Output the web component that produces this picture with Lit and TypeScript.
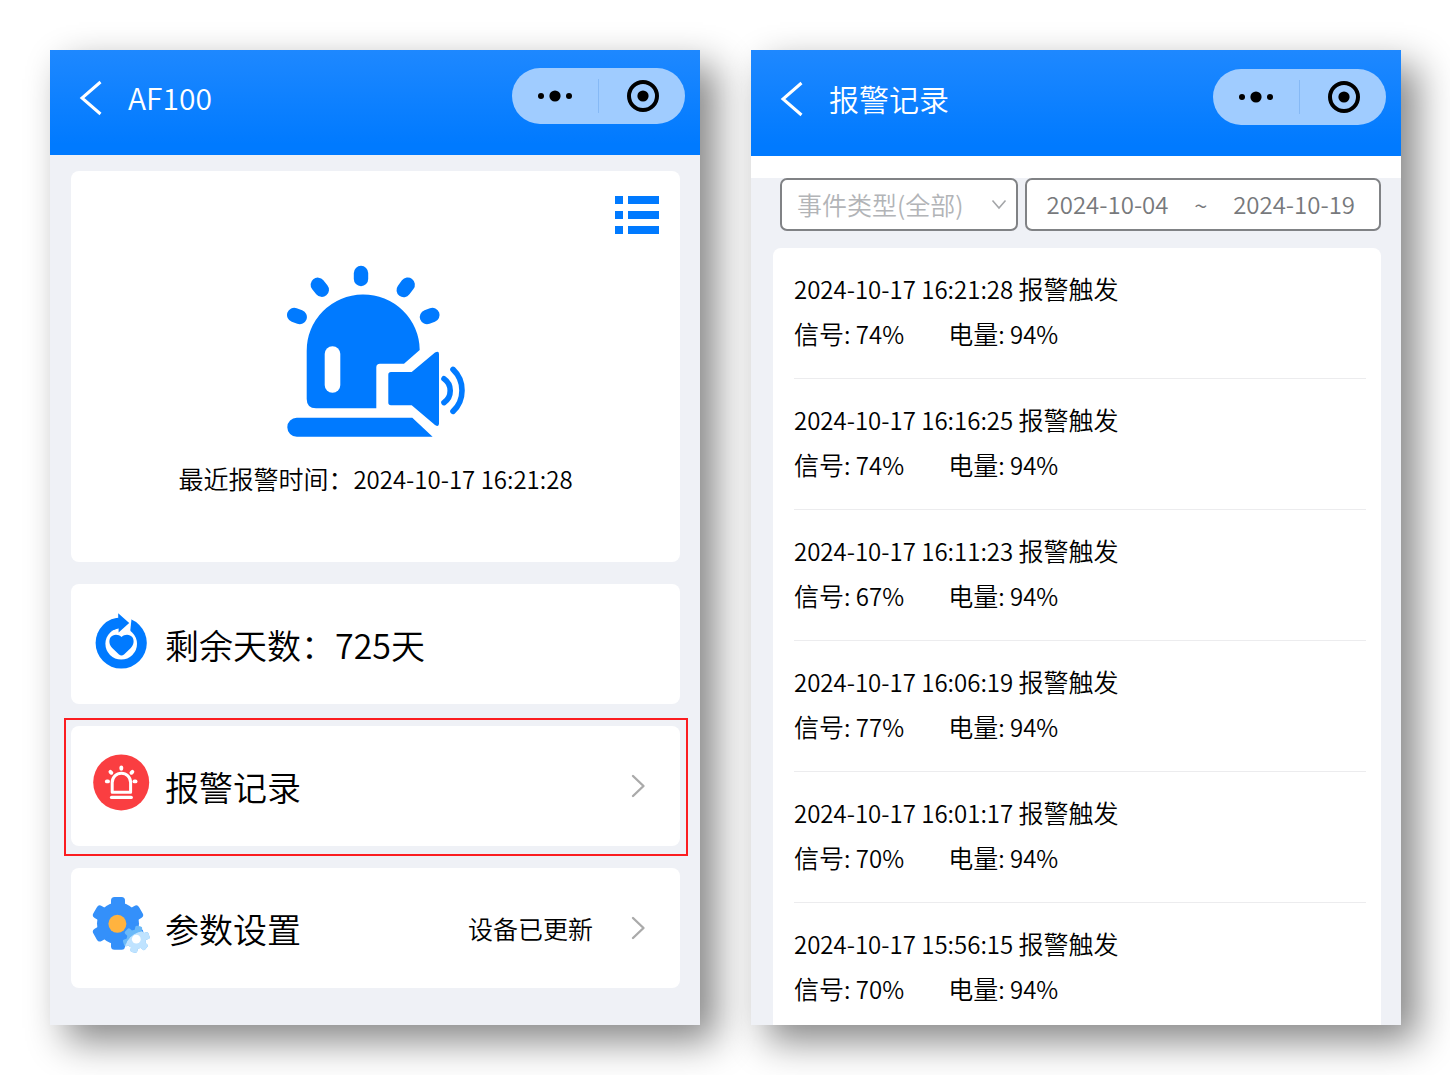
import { LitElement, html, css, svg } from "lit";
import { customElement, property } from "lit/decorators.js";

const fontStack = css`"Noto Sans CJK SC", "Noto Sans", sans-serif`;

interface AlarmRecord {
  time: string;
  event: string;
  signal: number;
  battery: number;
}

const records: AlarmRecord[] = [
  { time: "2024-10-17 16:21:28", event: "报警触发", signal: 74, battery: 94 },
  { time: "2024-10-17 16:16:25", event: "报警触发", signal: 74, battery: 94 },
  { time: "2024-10-17 16:11:23", event: "报警触发", signal: 67, battery: 94 },
  { time: "2024-10-17 16:06:19", event: "报警触发", signal: 77, battery: 94 },
  { time: "2024-10-17 16:01:17", event: "报警触发", signal: 70, battery: 94 },
  { time: "2024-10-17 15:56:15", event: "报警触发", signal: 70, battery: 94 },
];

const chevronRight = html`<svg class="chevron" width="15" height="24" viewBox="0 0 15 24" aria-hidden="true">
  <path d="M2 2 L12.5 12 L2 22" fill="none" stroke="#aaa" stroke-width="2.4" stroke-linecap="round" stroke-linejoin="round" />
</svg>`;

const sirenArt = html`<svg class="siren" width="180" height="174" viewBox="0 0 180 174" fill="#007aff" aria-hidden="true">
  <g stroke="#007aff" stroke-width="14.4" stroke-linecap="round">
    <path d="M75 8V14" />
    <path d="M31.8 19.8L35.8 24.7" />
    <path d="M121.7 19.7L117.7 25" />
    <path d="M8.2 50L13.7 52" />
    <path d="M146.4 50L141 52" />
  </g>
  <path d="M20.7 86A56.5 56 0 0 1 133.7 85L118 98.7H94Q90.3 98.7 90.3 102.4V143.3H30Q20.7 143.3 20.7 134Z" />
  <rect x="38.7" y="81.3" width="15.6" height="46.4" rx="7.8" fill="#fff" />
  <path d="M10.8 152.7H126.3L146.6 171.7H10.8A9.5 9.5 0 0 1 10.8 152.7Z" />
  <path d="M105 107H125.7L149 87.6Q153 85.4 153 89V158.6Q153 162.4 149 160L125.7 140.3H105Q102.3 140.3 102.3 137.6V109.7Q102.3 107 105 107Z" />
  <g fill="none" stroke="#007aff" stroke-width="5.6" stroke-linecap="round">
    <path d="M158 113.8A14.5 14.5 0 0 1 158 137.6" />
    <path d="M167 104.4A29 29 0 0 1 167 146.4" />
  </g>
</svg>`;

const renewIcon = html`<svg class="icon" width="58" height="64" viewBox="0 0 58 64" aria-hidden="true">
  <circle cx="29.2" cy="31" r="25.6" fill="#007aff" />
  <circle cx="29.2" cy="31.8" r="15.8" fill="#fff" />
  <path d="M26 0H39.4V8L38 21H28Z" fill="#fff" />
  <path d="M26.2 1.2L37.2 11L26.6 20.6V16.2L20 18.6V8.6L26.2 6.2Z" fill="#007aff" />
  <path d="M29.5 25C32.6 21.8 38 22 40.4 25.2C42.6 28.8 41.6 33 38.8 36L32 42.6Q29.5 44.4 27 42.6L20.2 36C17.4 33 16.4 28.8 18.6 25.2C21 22 26.4 21.8 29.5 25Z" fill="#007aff" />
</svg>`;

const alarmIcon = html`<svg class="icon" width="58" height="64" viewBox="0 0 58 64" aria-hidden="true">
  <circle cx="29.2" cy="28.4" r="28" fill="#fa3e41" />
  <g fill="none" stroke="#fff" stroke-linecap="round">
    <path d="M20.2 38.2V28.4A9.2 9.2 0 0 1 38.6 28.4V38.2Z" stroke-width="3" stroke-linejoin="round" />
    <path d="M19.6 43.4H39.2" stroke-width="3.4" />
    <g stroke-width="3.8">
      <path d="M14.8 27.4H16" />
      <path d="M18.4 17.8L19.4 18.8" />
      <path d="M29.3 13.4V14.8" />
      <path d="M40.4 17.8L39.4 18.8" />
      <path d="M43.6 27.4H42.4" />
    </g>
  </g>
</svg>`;

const cog = (cx: number, cy: number, body: number, outer: number, tooth: number, turn: number) => svg`
  <circle cx=${cx} cy=${cy} r=${body} />
  ${[0, 60, 120].map(
    (a) => svg`<rect x=${cx - tooth / 2} y=${cy - outer} width=${tooth} height=${outer * 2} rx=${tooth / 4}
      transform="rotate(${a + turn} ${cx} ${cy})" />`
  )}`;

const settingsIcon = html`<svg class="icon" width="58" height="64" viewBox="0 0 58 64" aria-hidden="true">
  <g fill="#3490fa">${cog(26, 27.4, 21, 26.4, 14, 0)}</g>
  <circle cx="25.4" cy="27.8" r="9" fill="#ffb33f" />
  <g fill="#6bb9f8">${cog(44.3, 43.2, 9.8, 13.4, 7, 12)}</g>
  <clipPath id="glow"><circle cx="54" cy="57" r="22" /></clipPath>
  <g fill="#bfe3ff" clip-path="url(#glow)">${cog(44.3, 43.2, 9.8, 13.4, 7, 12)}</g>
  <circle cx="44.3" cy="43.2" r="4.4" fill="#fff" />
</svg>`;

@customElement("phone-header")
export class PhoneHeader extends LitElement {
  @property() heading = "";

  static styles = css`
    :host {
      display: block;
      font-family: ${fontStack};
    }
    .bar {
      display: flex;
      align-items: center;
      padding: 18px 15px 31px 29px;
      background: linear-gradient(#1e88ff, #007aff 90%);
      color: #fff;
    }
    button {
      display: flex;
      align-items: center;
      justify-content: center;
      box-sizing: border-box;
      border: 0;
      padding: 0;
      background: none;
      color: inherit;
      cursor: pointer;
    }
    .back {
      padding-top: 3px;
    }
    h1 {
      flex: 1;
      margin: 0;
      padding: 2px 0 0 25px;
      font-size: 30px;
      line-height: 36px;
      font-weight: 350;
    }
    .capsule {
      display: flex;
      align-items: center;
      height: 56px;
      border-radius: 28px;
      background: #a0ccff;
    }
    .capsule button {
      width: 86px;
      height: 56px;
    }
    .capsule button + .rule + button {
      padding-left: 2px;
    }
    .rule {
      width: 1px;
      height: 34px;
      background: #86b9f5;
    }
  `;

  render() {
    return html`<header class="bar">
      <button class="back" aria-label="返回">
        <svg width="24" height="36" viewBox="0 0 24 36" aria-hidden="true">
          <path d="M21.5 2L3 18L21.5 34" fill="none" stroke="#fff" stroke-width="3" />
        </svg>
      </button>
      <h1>${this.heading}</h1>
      <div class="capsule">
        <button aria-label="更多">
          <svg width="36" height="12" viewBox="0 0 36 12" aria-hidden="true">
            <circle cx="4" cy="6" r="3" /><circle cx="18" cy="6" r="5.6" /><circle cx="32" cy="6" r="3" />
          </svg>
        </button>
        <span class="rule"></span>
        <button aria-label="关闭">
          <svg width="32" height="32" viewBox="0 0 32 32" aria-hidden="true">
            <circle cx="16" cy="16" r="14" fill="none" stroke="#000" stroke-width="4" />
            <circle cx="16" cy="16" r="5.6" />
          </svg>
        </button>
      </div>
    </header>`;
  }
}

@customElement("device-screen")
export class DeviceScreen extends LitElement {
  static styles = css`
    :host {
      display: block;
      background: #eff1f6;
      font-family: ${fontStack};
      font-weight: 350;
      color: #000;
    }
    .content {
      display: flex;
      flex-direction: column;
      gap: 22px;
      padding: 16px 20px 36px 21px;
    }
    .card {
      border-radius: 8px;
      background: #fff;
    }
    .status {
      display: flex;
      flex-direction: column;
      align-items: center;
      padding: 24px 21px 66px;
    }
    .menu {
      align-self: flex-end;
      display: block;
      border: 0;
      padding: 0;
      background: none;
      cursor: pointer;
    }
    .menu svg,
    .siren {
      display: block;
    }
    .siren {
      margin: 30px 0 21px;
    }
    .latest {
      margin: 0;
      font-size: 25px;
      line-height: 36px;
    }
    .digits {
      font-size: 24px;
      line-height: 1;
    }
    .row {
      display: flex;
      align-items: center;
      box-sizing: border-box;
      height: 120px;
      padding: 0 34px 0 21px;
      position: relative;
      font-size: 34px;
      color: inherit;
      text-decoration: none;
    }
    .icon {
      flex: none;
      margin-right: 15px;
    }
    .label {
      flex: 1;
    }
    .note {
      font-size: 25px;
    }
    .chevron {
      margin-left: 38px;
    }
    .marked::after {
      content: "";
      position: absolute;
      inset: -8px -8px -10px -7px;
      border: 2px solid #fb1d20;
    }
  `;

  render() {
    return html`
      <phone-header heading="AF100"></phone-header>
      <div class="content">
        <section class="card status">
          <button class="menu" aria-label="菜单">
            <svg width="44" height="40" viewBox="0 0 44 40" fill="#007aff" aria-hidden="true">
              <rect y="1" width="8" height="8" /><rect x="13" y="1" width="31" height="8" />
              <rect y="16" width="8" height="8" /><rect x="13" y="16" width="31" height="8" />
              <rect y="31" width="8" height="8" /><rect x="13" y="31" width="31" height="8" />
            </svg>
          </button>
          ${sirenArt}
          <p class="latest">最近报警时间：<span class="digits">2024-10-17 16:21:28</span></p>
        </section>
        <div class="card row">${renewIcon}<span class="label">剩余天数：725天</span></div>
        <a class="card row marked" href="#records">${alarmIcon}<span class="label">报警记录</span>${chevronRight}</a>
        <a class="card row" href="#settings">
          ${settingsIcon}<span class="label">参数设置</span><span class="note">设备已更新</span>${chevronRight}
        </a>
      </div>
    `;
  }
}

@customElement("records-screen")
export class RecordsScreen extends LitElement {
  static styles = css`
    :host {
      display: block;
      background: #eff1f6;
      font-family: ${fontStack};
      font-weight: 350;
      color: #000;
    }
    phone-header {
      padding-top: 1px;
      background: #1e88ff;
    }
    .strip {
      height: 22px;
      background: #fff;
    }
    .filters {
      display: grid;
      grid-template-columns: 2fr 3fr;
      gap: 7px;
      padding: 0 20px 17px 29px;
    }
    .field {
      display: flex;
      align-items: center;
      box-sizing: border-box;
      height: 53px;
      border: 2px solid #808285;
      border-radius: 7px;
      background: #fff;
    }
    select,
    input {
      min-width: 0;
      border: 0;
      padding: 0 0 2px;
      background: none;
      font: inherit;
      color: inherit;
      appearance: none;
      outline: 0;
    }
    .type {
      padding: 0 9px 0 15px;
      font-size: 25px;
      color: #b2b4b7;
    }
    .type select {
      flex: 1;
    }
    .range {
      padding: 0 24px 0 20px;
      font-size: 24px;
      color: #77797c;
    }
    .range input {
      flex: 1;
      width: 0;
    }
    .range .to {
      text-align: right;
    }
    .list {
      margin: 0 20px 0 22px;
      padding: 0 15px 0 21px;
      border-radius: 8px 8px 0 0;
      background: #fff;
      list-style: none;
    }
    .item {
      padding: 18px 0 22px;
      border-bottom: 1px solid #ececee;
      font-size: 25px;
      line-height: 45px;
    }
    .item:last-child {
      padding-bottom: 14px;
      border: 0;
    }
    .digits {
      font-size: 24px;
      line-height: 1;
    }
    .metrics {
      display: flex;
      gap: 44px;
    }
  `;

  render() {
    return html`
      <phone-header heading="报警记录"></phone-header>
      <div class="strip"></div>
      <div class="filters">
        <div class="field type">
          <select aria-label="事件类型">
            <option>事件类型(全部)</option>
          </select>
          <svg width="16" height="11" viewBox="0 0 16 11" aria-hidden="true">
            <path d="M1.5 1.5L8 9L14.5 1.5" fill="none" stroke="#a4a6a9" stroke-width="1.6" />
          </svg>
        </div>
        <div class="field range">
          <input aria-label="开始日期" value="2024-10-04" />
          <span>~</span>
          <input class="to" aria-label="结束日期" value="2024-10-19" />
        </div>
      </div>
      <ul class="list">
        ${records.map(
          (r) => html`<li class="item">
            <div><span class="digits">${r.time} </span>${r.event}</div>
            <div class="metrics">
              <span>信号<span class="digits">: ${r.signal}%</span></span>
              <span>电量<span class="digits">: ${r.battery}%</span></span>
            </div>
          </li>`
        )}
      </ul>
    `;
  }
}

@customElement("app-root")
export class AppRoot extends LitElement {
  static styles = css`
    :host {
      display: block;
      background: #fff;
    }
    .board {
      display: grid;
      grid-template-columns: 1fr 1fr;
      gap: 51px;
      padding: 50px 49px 50px 50px;
      overflow: hidden;
    }
    .phone {
      box-shadow: 16px 16px 36px rgba(0, 0, 0, 0.48);
    }
  `;

  render() {
    return html`<main class="board">
      <device-screen class="phone"></device-screen>
      <records-screen class="phone"></records-screen>
    </main>`;
  }
}
